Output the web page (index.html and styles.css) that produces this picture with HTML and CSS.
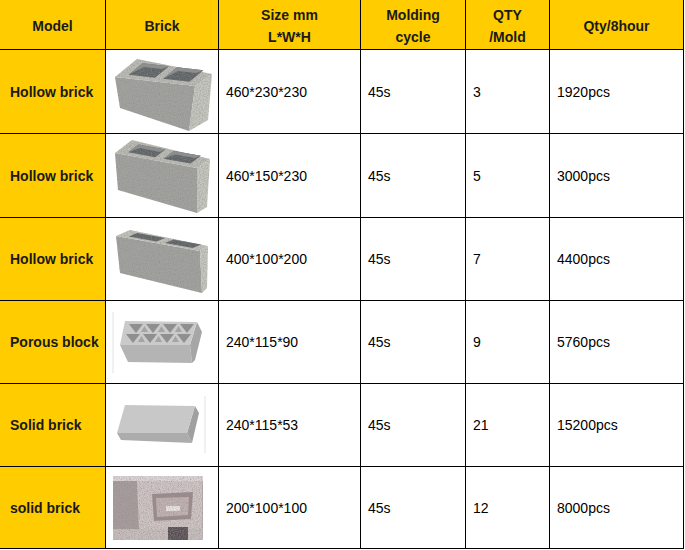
FILE: index.html
```html
<!DOCTYPE html>
<html>
<head>
<meta charset="utf-8">
<link rel="stylesheet" href="styles.css">
</head>
<body>
<svg class="defs" width="0" height="0">
  <defs>
    <filter id="grain" x="0" y="0" width="100%" height="100%">
      <feTurbulence type="fractalNoise" baseFrequency="0.9" numOctaves="2" seed="4" result="n"/>
      <feColorMatrix in="n" type="matrix" values="0 0 0 0 0.25  0 0 0 0 0.25  0 0 0 0 0.25  1.3 0 0 0 -0.5" result="dots"/>
      <feComposite in="dots" in2="SourceGraphic" operator="in" result="d2"/>
      <feMerge><feMergeNode in="SourceGraphic"/><feMergeNode in="d2"/></feMerge>
    </filter>
  </defs>
</svg>
<div class="table">
  <div class="cell head">Model</div>
  <div class="cell head">Brick</div>
  <div class="cell head">Size mm<br>L*W*H</div>
  <div class="cell head">Molding<br>cycle</div>
  <div class="cell head">QTY<br>/Mold</div>
  <div class="cell head">Qty/8hour</div>

  <div class="cell model">Hollow brick</div>
  <div class="cell pic">
    <svg width="112" height="83" viewBox="0 0 112 83">
      <g filter="url(#grain)">
        <polygon points="9,27 89,36 83,81 14,58" fill="#a2a29f"/>
        <polygon points="89,36 106,24 102,70 83,81" fill="#c6c6bf"/>
        <polygon points="9,27 31,9 106,24 89,36" fill="#bcbcb5"/>
        <polygon points="22.6,24.8 49,27.8 63,16.3 36.6,13.3" fill="#5e6466"/>
        <polygon points="22.6,24.8 36.6,13.3 63,16.3 56,19 38,17" fill="#8e9090"/>
        <polygon points="57,28.7 83.4,31.7 97.4,20.2 71,17.2" fill="#5e6466"/>
        <polygon points="57,28.7 71,17.2 97.4,20.2 90,23 72,21" fill="#8e9090"/>
      </g>
    </svg>
  </div>
  <div class="cell">460*230*230</div>
  <div class="cell">45s</div>
  <div class="cell">3</div>
  <div class="cell">1920pcs</div>

  <div class="cell model">Hollow brick</div>
  <div class="cell pic">
    <svg width="112" height="83" viewBox="0 0 112 83">
      <g filter="url(#grain)">
        <polygon points="9,19 91,34 91,79 12,56" fill="#a2a29f"/>
        <polygon points="91,34 104,25 101,73 91,79" fill="#c6c6bf"/>
        <polygon points="9,19 26,6 104,25 91,34" fill="#bcbcb5"/>
        <polygon points="22.2,18.2 49.3,23.2 59.5,15.4 32.4,10.4" fill="#5e6466"/>
        <polygon points="22.2,18.2 32.4,10.4 59.5,15.4 54,18 34,14" fill="#8e9090"/>
        <polygon points="57.5,24.7 84.6,29.6 94.8,21.8 67.7,16.9" fill="#5e6466"/>
        <polygon points="57.5,24.7 67.7,16.9 94.8,21.8 89,24 69,20.5" fill="#8e9090"/>
      </g>
    </svg>
  </div>
  <div class="cell">460*150*230</div>
  <div class="cell">45s</div>
  <div class="cell">5</div>
  <div class="cell">3000pcs</div>

  <div class="cell model">Hollow brick</div>
  <div class="cell pic">
    <svg width="112" height="83" viewBox="0 0 112 83">
      <g filter="url(#grain)">
        <polygon points="10,18 94,33 96,75 14,55" fill="#a2a29f"/>
        <polygon points="94,33 102,28 101,70 96,75" fill="#c6c6bf"/>
        <polygon points="10,18 24,12 102,28 94,33" fill="#c2c2bb"/>
        <polygon points="22.9,18.6 50.6,23.6 59,20 31.3,15" fill="#5e6466"/>
        <polygon points="59,25 86.7,30 95.1,26.4 67.4,21.5" fill="#5e6466"/>
      </g>
    </svg>
  </div>
  <div class="cell">400*100*200</div>
  <div class="cell">45s</div>
  <div class="cell">7</div>
  <div class="cell">4400pcs</div>

  <div class="cell model">Porous block</div>
  <div class="cell pic">
    <svg width="112" height="82" viewBox="0 0 112 82">
      <line x1="7" y1="11" x2="7" y2="72" stroke="#e2e2e2" stroke-width="1"/>
      <polygon points="14,44 84,44 86,62 22,61" fill="#b4b4b4"/>
      <polygon points="91,21 96,31 89,59 86,62 84,44" fill="#a6a6a6"/>
      <polygon points="19,20 91,21 84,44 14,44" fill="#cacaca"/>
      <g fill="#8f8f8f">
        <polygon points="23,23 37,23 30,32"/>
        <polygon points="40,23 54,23 47,32"/>
        <polygon points="57,23 71,23 64,32"/>
        <polygon points="74,23 88,23 81,32"/>
        <polygon points="20,33 34,33 27,42"/>
        <polygon points="37,33 51,33 44,42"/>
        <polygon points="54,33 68,33 61,42"/>
        <polygon points="71,33 85,33 78,42"/>
      </g>
      <g fill="#a4a4a4">
        <polygon points="35,31 42,31 38.5,25"/>
        <polygon points="52,31 59,31 55.5,25"/>
        <polygon points="69,31 76,31 72.5,25"/>
        <polygon points="32,41 39,41 35.5,35"/>
        <polygon points="49,41 56,41 52.5,35"/>
        <polygon points="66,41 73,41 69.5,35"/>
      </g>
    </svg>
  </div>
  <div class="cell">240*115*90</div>
  <div class="cell">45s</div>
  <div class="cell">9</div>
  <div class="cell">5760pcs</div>

  <div class="cell model">Solid brick</div>
  <div class="cell pic">
    <svg width="112" height="82" viewBox="0 0 112 82">
      <line x1="99" y1="12" x2="99" y2="69" stroke="#e2e2e2" stroke-width="1"/>
      <polygon points="11,49 81,49 86,59 15,56" fill="#acacac"/>
      <polygon points="89,22 93,29 86,59 81,49" fill="#a0a0a0"/>
      <polygon points="19,21 89,22 81,49 11,49" fill="#c8c8c8"/>
    </svg>
  </div>
  <div class="cell">240*115*53</div>
  <div class="cell">45s</div>
  <div class="cell">21</div>
  <div class="cell">15200pcs</div>

  <div class="cell model">solid brick</div>
  <div class="cell pic">
    <svg width="112" height="81" viewBox="0 0 112 81">
      <g filter="url(#grain)">
        <rect x="7" y="9" width="90" height="64" fill="#b8acac"/>
        <rect x="7" y="9" width="90" height="5" fill="#ddd6d6"/>
        <polygon points="7,14 31,14 33,62 7,62" fill="#a89c9c"/>
        <polygon points="31,14 96,14 96,62 33,62" fill="#d0c4c4"/>
        <polygon points="46,27 87,25 85,52 48,54" fill="#9c8c8e"/>
        <polygon points="50,31 83,30 82,48 51,50" fill="#c2b2b2"/>
        <rect x="7" y="62" width="90" height="11" fill="#c8bebe"/>
        <rect x="62" y="60" width="20" height="13" fill="#5a5052"/>
        <rect x="60" y="39" width="14" height="5" fill="#ebe4e4"/>
      </g>
    </svg>
  </div>
  <div class="cell">200*100*100</div>
  <div class="cell">45s</div>
  <div class="cell">12</div>
  <div class="cell">8000pcs</div>
</div>
</body>
</html>
```
FILE: styles.css
```css
html, body {
  margin: 0;
  padding: 0;
  background: #ffffff;
}

body {
  font-family: "Liberation Sans", Arial, sans-serif;
  font-size: 14px;
  color: #000000;
}

.defs {
  display: block;
  width: 0;
  height: 0;
}

.table {
  display: grid;
  grid-template-columns: 106px 113px 142px 105px 84px 134px;
  grid-template-rows: 50px 84px 84px 83px 83px 83px 82px;
  width: 684px;
}

.cell {
  box-sizing: border-box;
  border-right: 1px solid #000000;
  border-bottom: 1px solid #000000;
  display: flex;
  align-items: center;
  padding-left: 7px;
  line-height: 16px;
  background: #ffffff;
}

.head {
  background: #ffcc00;
  color: #1a1a1a;
  font-weight: bold;
  justify-content: center;
  text-align: center;
  padding: 2px 0 0 0;
  line-height: 22px;
}

.model {
  background: #ffcc00;
  color: #1a1a1a;
  font-weight: bold;
  padding-left: 10px;
}

.pic {
  padding: 0;
  align-items: stretch;
}

.pic svg {
  display: block;
}
```
